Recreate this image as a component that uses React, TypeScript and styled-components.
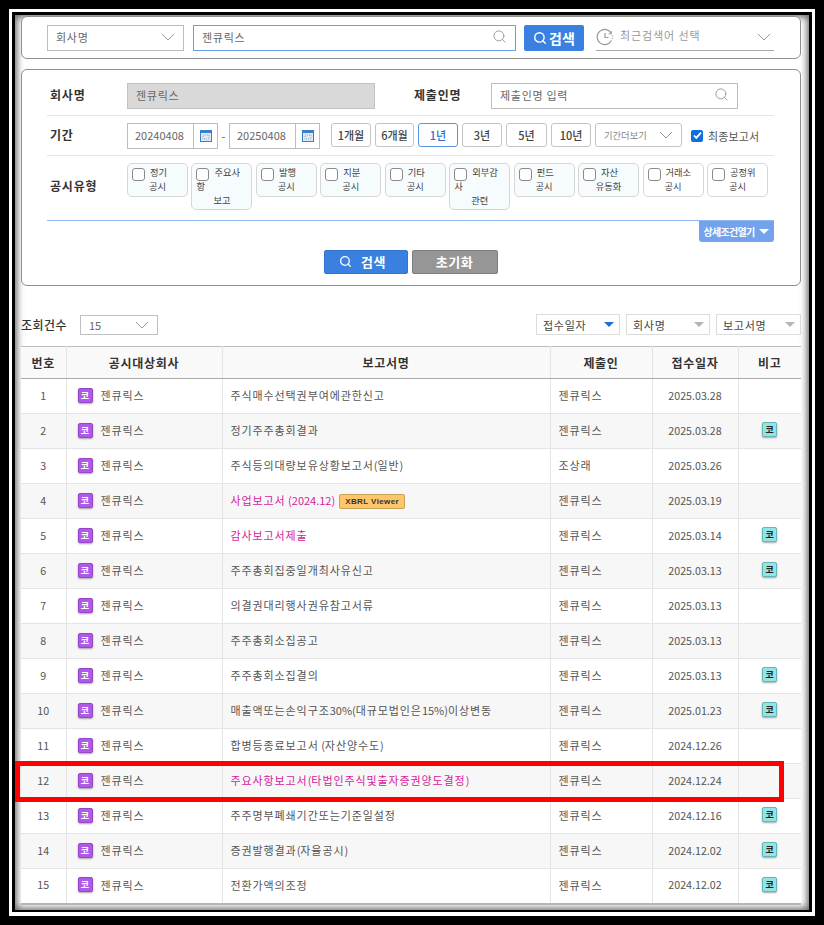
import React from 'react'
import styled, { createGlobalStyle } from 'styled-components'
import { Search } from 'lucide-react'

const GlobalStyle = createGlobalStyle`
  html, body { margin: 0; padding: 0; background: #000; }
  body { font-family: "Noto Sans CJK KR", "Noto Sans", sans-serif; }
  * { box-sizing: border-box; }
`

const OuterFrame = styled.div`
  width: 824px;
  height: 925px;
  border: 9px solid #000;
`
const WhiteFrame = styled.div`
  width: 100%;
  height: 100%;
  border: 3px solid #fff;
  border-bottom-width: 4px;
`
const InnerFrame = styled.div`
  width: 100%;
  height: 100%;
  border: 3px solid #000;
  border-bottom-width: 2px;
`
const Content = styled.div`
  position: relative;
  width: 100%;
  height: 100%;
  padding: 1px 8px 0 6px;
  background: #fff;
  overflow: hidden;
  box-shadow: inset 0 0 7px 2px #666;
`
const Card = styled.section`
  border: 1px solid #8f8f8f;
  border-radius: 6px;
  background: #fff;
`
const TopCard = styled(Card)`
  height: 43px;
  margin-bottom: 10px;
  padding-left: 25px;
  display: flex;
  align-items: center;
`
const FilterCard = styled(Card)`
  height: 217px;
  padding: 13px 26px 0 25px;
`
const Field = styled.div<{ $w: number; $focus?: boolean; $gray?: boolean }>`
  width: ${(p) => p.$w}px;
  height: 26px;
  flex: none;
  display: flex;
  align-items: center;
  justify-content: space-between;
  padding: 0 8px 2px;
  margin-left: ${(p) => (p.$focus ? 9 : 0)}px;
  border: 1px solid ${(p) => (p.$focus ? '#6a9fe8' : p.$gray ? '#c2c2c2' : '#bdbdbd')};
  background: ${(p) => (p.$gray ? '#d9d9d9' : '#fff')};
  font-size: 11px;
  letter-spacing: 0.7px;
  color: #666;
`
const SearchBtn = styled.div`
  width: 60px;
  height: 26px;
  flex: none;
  margin: 0 12px 0 8px;
  display: flex;
  align-items: center;
  justify-content: center;
  gap: 2px;
  background: #3a80e0;
  border-radius: 2px;
  color: #fff;
  font-size: 14px;
  font-weight: 700;
`
const Recent = styled.div`
  width: 178px;
  height: 26px;
  display: flex;
  align-items: center;
  gap: 5px;
  padding-right: 3px;
  border-bottom: 1px solid #aaa;
  font-size: 11px;
  letter-spacing: 0.9px;
  color: #999;
`
const RecentText = styled.span`
  flex: 1;
  margin-top: -5px;
  padding-left: 1px;
`
const Row = styled.div`
  display: flex;
  align-items: center;
  height: 25px;
`
const PeriodRow = styled.div`
  display: flex;
  align-items: center;
  margin-top: 7px;
  padding: 7px 0;
  border-top: 1px solid #e6e6e6;
  border-bottom: 1px solid #e6e6e6;
  height: 41px;
`
const Label = styled.div<{ $ml?: number }>`
  width: 80px;
  flex: none;
  margin-left: ${(p) => p.$ml ?? 0}px;
  padding: 0 0 3px 3px;
  font-size: 12px;
  font-weight: 700;
  letter-spacing: 0.8px;
  color: #333;
`
const DateBox = styled.div`
  width: 91px;
  height: 26px;
  flex: none;
  display: flex;
  border: 1px solid #bdbdbd;
  font-size: 11px;
  color: #666;
`
const DateText = styled.div`
  flex: 1;
  padding-left: 7px;
  line-height: 22px;
`
const CalCell = styled.div`
  width: 24px;
  border-left: 1px solid #bdbdbd;
  display: flex;
  align-items: center;
  justify-content: center;
`
const Dash = styled.span`
  width: 11px;
  text-align: center;
  font-size: 11px;
  color: #555;
`
const PeriodButtons = styled.div`
  display: flex;
  gap: 4px;
  margin-left: 11px;
  align-self: flex-start;
`
const PeriodBtn = styled.div<{ $w: number; $active?: boolean }>`
  width: ${(p) => p.$w}px;
  height: 24px;
  display: flex;
  align-items: center;
  justify-content: center;
  border: 1px solid ${(p) => (p.$active ? '#5a96e6' : '#c4c4c4')};
  border-radius: 3px;
  font-size: 11px;
  font-weight: 500;
  color: ${(p) => (p.$active ? '#2f6fd0' : '#444')};
`
const MoreSelect = styled(PeriodBtn)`
  justify-content: space-between;
  padding: 0 8px;
  color: #888;
  font-size: 9.3px;
  font-weight: 400;
`
const FinalCheck = styled.div`
  margin-left: 9px;
  display: flex;
  align-items: center;
  gap: 5px;
  font-size: 11px;
  letter-spacing: 0.1px;
  color: #555;
  white-space: nowrap;
`
const CheckMark = styled.span`
  width: 12px;
  height: 12px;
  border-radius: 2px;
  background: #0f6fe0;
  display: flex;
  align-items: center;
  justify-content: center;
`
const TypeRow = styled.div`
  display: flex;
  align-items: flex-start;
  height: 64px;
  padding-top: 7px;
`
const TypeLabel = styled(Label)`
  padding-top: 14px;
`
const Chips = styled.div`
  display: flex;
  align-items: flex-start;
  gap: 3.45px;
`
const Chip = styled.div<{ $plain?: boolean }>`
  width: 61px;
  padding: 1px 4px 2px 4px;
  border: 1px solid #d6d6d6;
  border-radius: 5px;
  background: ${(p) => (p.$plain ? '#fff' : '#f6fbfe')};
  font-size: 9.3px;
  line-height: 13.5px;
  color: #444;
`
const ChipTop = styled.div`
  display: flex;
  align-items: flex-start;
  gap: 5px;
  padding-top: 1px;
  height: 15px;
`
const ChipBox = styled.span`
  width: 13px;
  height: 13px;
  flex: none;
  margin-top: 2px;
  border: 1px solid #8a8a8a;
  border-radius: 3px;
  background: #fff;
`
const ChipLine = styled.div<{ $left?: boolean }>`
  text-align: ${(p) => (p.$left ? 'left' : 'center')};
`
const BlueLine = styled.div`
  height: 1px;
  background: #8db5ef;
`
const DetailRow = styled.div`
  display: flex;
  justify-content: flex-end;
`
const DetailBtn = styled.div`
  width: 75px;
  height: 21px;
  display: flex;
  align-items: center;
  justify-content: center;
  gap: 4px;
  background: #73a3ec;
  border-radius: 0 0 3px 3px;
  color: #fff;
  font-size: 10px;
  font-weight: 700;
  letter-spacing: -0.7px;
`
const Actions = styled.div`
  margin-top: 8px;
  display: flex;
  justify-content: center;
  gap: 4px;
`
const ActionBtn = styled.div<{ $w: number; $gray?: boolean }>`
  width: ${(p) => p.$w}px;
  height: 24px;
  display: flex;
  align-items: center;
  justify-content: center;
  gap: 9px;
  padding: 0 ${(p) => (p.$gray ? 0 : 6)}px 2px 0;
  background: ${(p) => (p.$gray ? '#969696' : '#3a80e0')};
  border: 1px solid ${(p) => (p.$gray ? '#7e7e7e' : '#3374cf')};
  border-radius: 2px;
  color: #fff;
  font-size: 13px;
  font-weight: 700;
  letter-spacing: 0.6px;
`
const Toolbar = styled.div`
  margin-top: 28px;
  height: 21px;
  display: flex;
  align-items: center;
`
const CountLabel = styled.span`
  width: 59px;
  font-size: 12px;
  font-weight: 500;
  letter-spacing: 0.5px;
  color: #333;
`
const CountSelect = styled.div`
  width: 78px;
  height: 20px;
  display: flex;
  align-items: center;
  justify-content: space-between;
  padding: 0 8px;
  border: 1px solid #c0c0c0;
  font-size: 11px;
  color: #666;
`
const SortGroup = styled.div`
  margin-left: auto;
  display: flex;
  gap: 6px;
`
const SortSelect = styled.div<{ $w: number }>`
  width: ${(p) => p.$w}px;
  height: 21px;
  display: flex;
  align-items: center;
  justify-content: space-between;
  padding: 0 4px 0 6px;
  border: 1px solid #dcdcdc;
  font-size: 11px;
  letter-spacing: 0.7px;
  color: #444;
`
const Triangle = styled.span<{ $on?: boolean; $white?: boolean }>`
  width: 0;
  height: 0;
  border-left: 5px solid transparent;
  border-right: 5px solid transparent;
  border-top: 5px solid ${(p) => (p.$white ? '#fff' : p.$on ? '#1f6fd8' : '#b5b5b5')};
  margin-right: 1px;
`
const Table = styled.table`
  width: 780px;
  margin-top: 11px;
  table-layout: fixed;
  border-collapse: collapse;
  border-top: 1px solid #bdbdbd;
  border-bottom: 2px solid #b5b5b5;
`
const Th = styled.th`
  height: 32px;
  padding: 0;
  background: #f9f9f9;
  border-bottom: 1px solid #aaa;
  border-left: 1px solid #e4e4e4;
  font-size: 12px;
  font-weight: 700;
  letter-spacing: 0.7px;
  color: #333;
  &:first-child { border-left: 0; }
`
const Tr = styled.tr<{ $even: boolean }>`
  height: 35px;
  background: ${(p) => (p.$even ? '#f7f7f7' : '#fff')};
  border-bottom: 1px solid #e4e4e4;
`
const Td = styled.td<{ $center?: boolean; $pl?: number }>`
  padding: 0 0 2px ${(p) => p.$pl ?? 0}px;
  border-left: 1px solid #e4e4e4;
  font-size: 11px;
  letter-spacing: 0.9px;
  color: #555;
  text-align: ${(p) => (p.$center ? 'center' : 'left')};
  &:first-child { border-left: 0; }
`
const NumTd = styled(Td)`
  font-size: 10.7px;
  letter-spacing: 0;
`
const NoteTd = styled(Td)`
  padding-bottom: 5px;
`
const CompanyCell = styled.div`
  display: flex;
  align-items: center;
  gap: 8px;
`
const Mark = styled.span<{ $teal?: boolean }>`
  width: 15px;
  height: 15px;
  flex: none;
  display: inline-flex;
  align-items: center;
  justify-content: center;
  border-radius: 2px;
  background: ${(p) => (p.$teal ? '#93e4e4' : '#ae5ae6')};
  border: 1px solid ${(p) => (p.$teal ? '#62b8b8' : '#9644cc')};
  box-shadow: 0 1px 2px rgba(0, 0, 0, 0.35);
  color: ${(p) => (p.$teal ? '#222' : '#fff')};
  font-size: 9px;
  font-weight: 700;
  letter-spacing: 0;
  line-height: 1;
`
const Title = styled.span<{ $pink?: boolean }>`
  color: ${(p) => (p.$pink ? '#d61a9c' : '#555')};
`
const Latin = styled.span`
  letter-spacing: 0;
`
const Xbrl = styled.span`
  display: inline-block;
  margin-left: 4px;
  padding: 0 5px;
  height: 15px;
  line-height: 14px;
  vertical-align: 1px;
  background: #fdc66b;
  border: 1px solid #c9a056;
  border-radius: 2px;
  font-family: "Liberation Sans", sans-serif;
  font-size: 8px;
  font-weight: 700;
  letter-spacing: 0.4px;
  color: #333;
`
const Highlight = styled.div`
  position: absolute;
  left: 0;
  top: 746px;
  width: 769px;
  height: 41px;
  border: 5px solid #f00;
  pointer-events: none;
`

const Chevron = () => (
  <svg width="14" height="8" viewBox="0 0 14 8" fill="none" stroke="#999" strokeWidth="1">
    <path d="M1 1l6 6 6-6" />
  </svg>
)

const CalendarIcon = () => (
  <svg width="12" height="12" viewBox="0 0 12 12">
    <rect x="0" y="0" width="12" height="12" fill="#dfe9f7" />
    <rect x="0" y="0" width="12" height="3" fill="#3a80c8" />
    <rect x="0" y="0" width="1" height="12" fill="#3a80c8" />
    <rect x="11" y="0" width="1" height="12" fill="#3a80c8" />
    <rect x="0" y="11" width="12" height="1" fill="#3a80c8" />
    <path d="M3 5h6v4H3z" fill="none" stroke="#8fa9cc" strokeDasharray="1 1" />
  </svg>
)

const ClockIcon = () => (
  <svg width="18" height="18" viewBox="0 0 18 18" fill="none" stroke="#999" strokeWidth="1.2">
    <path d="M15.5 5.5A7.6 7.6 0 1 0 15.5 12.5" />
    <path d="M9 5v4.5h3.5" />
    <path d="M16.4 7.6v.8M16.4 10v.8" strokeWidth="1.4" />
    <path d="M15.2 3.2v2.6h-2.6" strokeWidth="1" />
  </svg>
)

// digits and brackets sit tighter than the hangul around them
const spaced = (text: string) =>
  text.split(/([^가-힣]+)/).map((part, i) => (i % 2 ? <Latin key={i}>{part}</Latin> : part))

const periods: [string, number, boolean?][] = [
  ['1개월', 40],
  ['6개월', 39],
  ['1년', 40, true],
  ['3년', 40],
  ['5년', 41],
  ['10년', 40],
]

const chips = [
  { top: '정기', lines: ['공시'] },
  { top: '주요사', left: '항', lines: ['보고'] },
  { top: '발행', lines: ['공시'] },
  { top: '지분', lines: ['공시'] },
  { top: '기타', lines: ['공시'] },
  { top: '외부감', left: '사', lines: ['관련'] },
  { top: '펀드', lines: ['공시'] },
  { top: '자산', lines: ['유동화'] },
  { top: '거래소', lines: ['공시'], plain: true },
  { top: '공정위', lines: ['공시'], plain: true },
]

type Report = {
  title: string
  date: string
  by?: string
  pink?: boolean
  note?: boolean
  xbrl?: boolean
}

const reports: Report[] = [
  { title: '주식매수선택권부여에관한신고', date: '2025.03.28' },
  { title: '정기주주총회결과', date: '2025.03.28', note: true },
  { title: '주식등의대량보유상황보고서(일반)', date: '2025.03.26', by: '조상래' },
  { title: '사업보고서 (2024.12)', date: '2025.03.19', pink: true, xbrl: true },
  { title: '감사보고서제출', date: '2025.03.14', pink: true, note: true },
  { title: '주주총회집중일개최사유신고', date: '2025.03.13', note: true },
  { title: '의결권대리행사권유참고서류', date: '2025.03.13' },
  { title: '주주총회소집공고', date: '2025.03.13' },
  { title: '주주총회소집결의', date: '2025.03.13', note: true },
  { title: '매출액또는손익구조30%(대규모법인은15%)이상변동', date: '2025.01.23', note: true },
  { title: '합병등종료보고서 (자산양수도)', date: '2024.12.26' },
  { title: '주요사항보고서(타법인주식및출자증권양도결정)', date: '2024.12.24', pink: true },
  { title: '주주명부폐쇄기간또는기준일설정', date: '2024.12.16', note: true },
  { title: '증권발행결과(자율공시)', date: '2024.12.02', note: true },
  { title: '전환가액의조정', date: '2024.12.02', note: true },
]

const App: React.FC = () => {
  return (
    <>
      <GlobalStyle />
      <OuterFrame>
        <WhiteFrame>
          <InnerFrame>
            <Content>
              <TopCard>
                <Field $w={137}>
                  회사명
                  <Chevron />
                </Field>
                <Field $w={323} $focus>
                  젠큐릭스
                  <Search size={15} color="#999" strokeWidth={1.5} />
                </Field>
                <SearchBtn>
                  <Search size={14} strokeWidth={2.4} />
                  검색
                </SearchBtn>
                <Recent>
                  <ClockIcon />
                  <RecentText>최근검색어 선택</RecentText>
                  <Chevron />
                </Recent>
              </TopCard>

              <FilterCard>
                <Row>
                  <Label>회사명</Label>
                  <Field $w={248} $gray>
                    젠큐릭스
                  </Field>
                  <Label $ml={36}>제출인명</Label>
                  <Field $w={247}>
                    제출인명 입력
                    <Search size={15} color="#999" strokeWidth={1.5} />
                  </Field>
                </Row>
                <PeriodRow>
                  <Label>기간</Label>
                  <DateBox>
                    <DateText>20240408</DateText>
                    <CalCell>
                      <CalendarIcon />
                    </CalCell>
                  </DateBox>
                  <Dash>-</Dash>
                  <DateBox>
                    <DateText>20250408</DateText>
                    <CalCell>
                      <CalendarIcon />
                    </CalCell>
                  </DateBox>
                  <PeriodButtons>
                    {periods.map(([text, w, active]) => (
                      <PeriodBtn key={text} $w={w} $active={active}>
                        {text}
                      </PeriodBtn>
                    ))}
                    <MoreSelect $w={87}>
                      기간더보기
                      <Chevron />
                    </MoreSelect>
                  </PeriodButtons>
                  <FinalCheck>
                    <CheckMark>
                      <svg width="9" height="9" viewBox="0 0 9 9" fill="none" stroke="#fff" strokeWidth="1.8">
                        <path d="M1 4.5l2.3 2.4L8 1.6" />
                      </svg>
                    </CheckMark>
                    최종보고서
                  </FinalCheck>
                </PeriodRow>
                <TypeRow>
                  <TypeLabel>공시유형</TypeLabel>
                  <Chips>
                    {chips.map((c) => (
                      <Chip key={c.top} $plain={c.plain}>
                        <ChipTop>
                          <ChipBox />
                          {c.top}
                        </ChipTop>
                        {c.left && <ChipLine $left>{c.left}</ChipLine>}
                        {c.lines.map((l) => (
                          <ChipLine key={l}>{l}</ChipLine>
                        ))}
                      </Chip>
                    ))}
                  </Chips>
                </TypeRow>
                <BlueLine />
                <DetailRow>
                  <DetailBtn>
                    상세조건열기
                    <Triangle $white />
                  </DetailBtn>
                </DetailRow>
                <Actions>
                  <ActionBtn $w={84}>
                    <Search size={13} strokeWidth={2.4} />
                    검색
                  </ActionBtn>
                  <ActionBtn $w={86} $gray>
                    초기화
                  </ActionBtn>
                </Actions>
              </FilterCard>

              <Toolbar>
                <CountLabel>조회건수</CountLabel>
                <CountSelect>
                  15
                  <Chevron />
                </CountSelect>
                <SortGroup>
                  <SortSelect $w={84}>
                    접수일자
                    <Triangle $on />
                  </SortSelect>
                  <SortSelect $w={84}>
                    회사명
                    <Triangle />
                  </SortSelect>
                  <SortSelect $w={85}>
                    보고서명
                    <Triangle />
                  </SortSelect>
                </SortGroup>
              </Toolbar>

              <Table>
                <colgroup>
                  <col style={{ width: 45 }} />
                  <col style={{ width: 156 }} />
                  <col style={{ width: 328 }} />
                  <col style={{ width: 102 }} />
                  <col style={{ width: 86 }} />
                  <col style={{ width: 63 }} />
                </colgroup>
                <thead>
                  <tr>
                    <Th>번호</Th>
                    <Th>공시대상회사</Th>
                    <Th>보고서명</Th>
                    <Th>제출인</Th>
                    <Th>접수일자</Th>
                    <Th>비고</Th>
                  </tr>
                </thead>
                <tbody>
                  {reports.map((r, i) => (
                    <Tr key={r.title} $even={i % 2 === 1}>
                      <NumTd $center>{i + 1}</NumTd>
                      <Td $pl={11}>
                        <CompanyCell>
                          <Mark>코</Mark>
                          젠큐릭스
                        </CompanyCell>
                      </Td>
                      <Td $pl={8}>
                        <Title $pink={r.pink}>{spaced(r.title)}</Title>
                        {r.xbrl && <Xbrl>XBRL Viewer</Xbrl>}
                      </Td>
                      <Td $pl={8}>{r.by ?? '젠큐릭스'}</Td>
                      <NumTd $center>{r.date}</NumTd>
                      <NoteTd $center>{r.note && <Mark $teal>코</Mark>}</NoteTd>
                    </Tr>
                  ))}
                </tbody>
              </Table>

              <Highlight />
            </Content>
          </InnerFrame>
        </WhiteFrame>
      </OuterFrame>
    </>
  )
}

export default App
